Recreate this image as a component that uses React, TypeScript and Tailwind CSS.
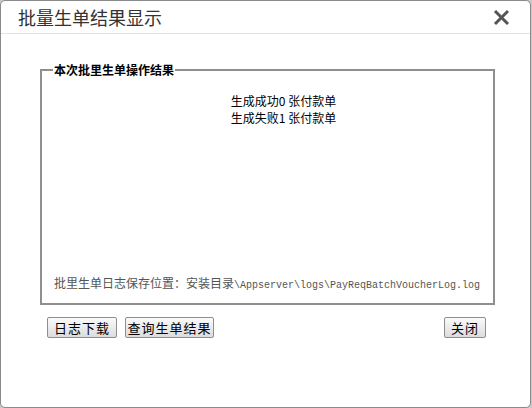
import React from "react";

const cjk = { fontFamily: '"Noto Sans CJK SC", "Noto Sans", sans-serif' };
const mono = { fontFamily: '"Liberation Mono", monospace' };

const Btn = ({ label, w }: { label: string; w: string }) => (
  <button
    className={`${w} h-[21px] border border-[#8e8e8e] rounded-[2px] bg-gradient-to-b from-[#fbfbfb] to-[#dcdcdc] text-[13px] leading-none text-black tracking-[1px] flex items-center justify-center`}
    style={cjk}
  >
    {label}
  </button>
);

export default function App() {
  return (
    <div className="w-[532px] h-[408px] bg-[#c9c9c9] flex overflow-hidden">
      <div className="w-[531px] h-[408px] bg-white border border-[#8a8a8a] rounded-[5px] flex flex-col">
        <div className="h-[33px] border-b border-[#e3e3e3] flex items-center justify-between pl-[17px] pr-[20px]">
          <span className="text-[18px] text-[#333] leading-none" style={cjk}>
            批量生单结果显示
          </span>
          <svg width="17" height="17" viewBox="0 0 17 17">
            <path d="M2 2 L15 15 M15 2 L2 15" stroke="#555" strokeWidth="3" strokeLinecap="butt" />
          </svg>
        </div>

        <div className="pl-[39px] pr-[35px] pt-[29px]">
          <fieldset className="h-[242px] border-2 border-[#8f8f8f] px-[10px] pb-[9px] flex flex-col">
            <legend className="px-[1px] ml-[1px] text-[12px] font-bold text-black leading-[14px]" style={cjk}>
              本次批里生单操作结果
            </legend>
            <div className="pt-[15px] pl-[32px] text-center text-[12px] leading-[17px] text-black" style={cjk}>
              <div>生成成功0 张付款单</div>
              <div>生成失败1 张付款单</div>
            </div>
            <div className="flex-1" />
            <div className="text-[12px] leading-[16px] text-[#555] whitespace-nowrap pl-[2px]" style={cjk}>
              批里生单日志保存位置：安装目录
              <span className="text-[10px]" style={mono}>
                \Appserver\logs\PayReqBatchVoucherLog.log
              </span>
            </div>
          </fieldset>
          <div className="flex items-center pl-[7px] pr-[9px] pt-[12px]">
            <Btn label="日志下载" w="w-[70px]" />
            <div className="w-[8px]" />
            <Btn label="查询生单结果" w="w-[89px]" />
            <div className="flex-1" />
            <Btn label="关闭" w="w-[42px]" />
          </div>
        </div>
      </div>
    </div>
  );
}
